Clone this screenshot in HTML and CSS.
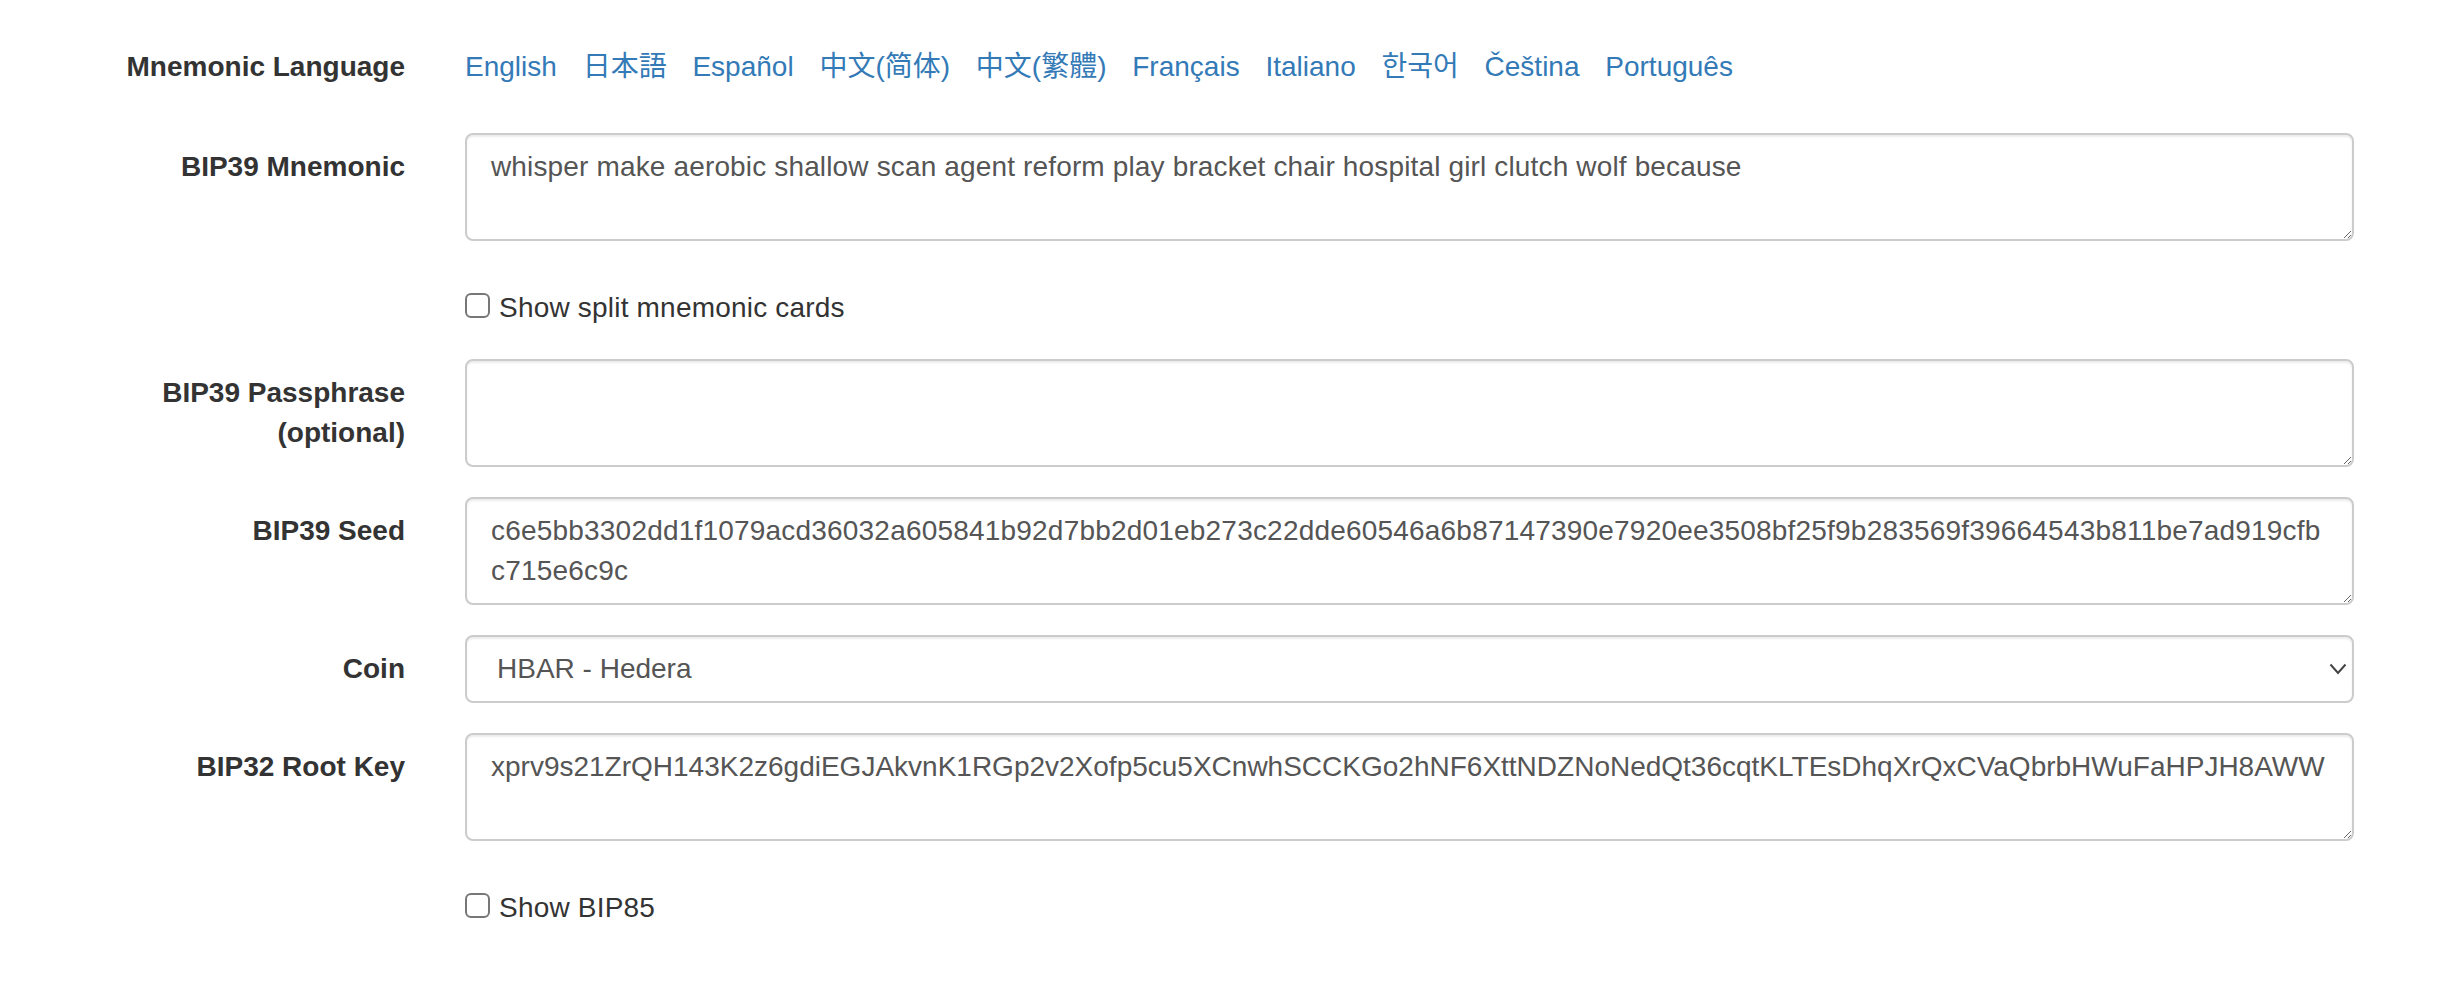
FILE: index.html
```html
<!DOCTYPE html>
<html lang="en">
<head>
<meta charset="utf-8">
<title>Mnemonic Code Converter</title>
<link rel="stylesheet" href="styles.css">
</head>
<body>
<form class="form">
  <div class="form-group lang-group">
    <label class="control-label">Mnemonic Language</label>
    <div class="controls languages">
      <a href="#english">English</a>
      <a href="#japanese" class="ja" lang="ja">日本語</a>
      <a href="#spanish">Español</a>
      <a href="#chinese_simplified" class="sc" lang="zh-Hans">中文(简体)</a>
      <a href="#chinese_traditional" class="tc" lang="zh-Hant">中文(繁體)</a>
      <a href="#french">Français</a>
      <a href="#italian">Italiano</a>
      <a href="#korean" class="ko" lang="ko">한국어</a>
      <a href="#czech">Čeština</a>
      <a href="#portuguese">Português</a>
    </div>
  </div>

  <div class="form-group">
    <label class="control-label" for="phrase">BIP39 Mnemonic</label>
    <div class="controls">
      <textarea id="phrase" class="form-control phrase">whisper make aerobic shallow scan agent reform play bracket chair hospital girl clutch wolf because</textarea>
    </div>
  </div>

  <div class="form-group checkbox">
    <div class="controls offset">
      <label class="check-label"><input type="checkbox" class="check">Show split mnemonic cards</label>
    </div>
  </div>

  <div class="form-group">
    <label class="control-label" for="passphrase">BIP39 Passphrase (optional)</label>
    <div class="controls">
      <textarea id="passphrase" class="form-control"></textarea>
    </div>
  </div>

  <div class="form-group">
    <label class="control-label" for="seed">BIP39 Seed</label>
    <div class="controls">
      <textarea id="seed" class="form-control seed">c6e5bb3302dd1f1079acd36032a605841b92d7bb2d01eb273c22dde60546a6b87147390e7920ee3508bf25f9b283569f39664543b811be7ad919cfbc715e6c9c</textarea>
    </div>
  </div>

  <div class="form-group">
    <label class="control-label" for="network">Coin</label>
    <div class="controls select-wrap">
      <select id="network" class="form-control">
        <option>HBAR - Hedera</option>
      </select>
      <svg class="chevron" viewBox="0 0 18 12" aria-hidden="true"><polyline points="1.5,1.5 9,10 16.5,1.5" fill="none" stroke="#444" stroke-width="2"/></svg>
    </div>
  </div>

  <div class="form-group">
    <label class="control-label" for="root-key">BIP32 Root Key</label>
    <div class="controls">
      <textarea id="root-key" class="form-control">xprv9s21ZrQH143K2z6gdiEGJAkvnK1RGp2v2Xofp5cu5XCnwhSCCKGo2hNF6XttNDZNoNedQt36cqtKLTEsDhqXrQxCVaQbrbHWuFaHPJH8AWW</textarea>
    </div>
  </div>

  <div class="form-group checkbox">
    <div class="controls offset">
      <label class="check-label"><input type="checkbox" class="check">Show BIP85</label>
    </div>
  </div>
</form>
</body>
</html>
```

FILE: styles.css
```css
* {
  box-sizing: border-box;
}

html,
body {
  margin: 0;
  padding: 0;
  background: #fff;
}

body {
  font-family: "Liberation Sans", Arial, Helvetica, sans-serif;
  font-size: 28px;
  line-height: 40px;
  color: #333;
}

.form {
  padding: 33px 0 0 75px;
}

.form-group {
  display: flex;
  margin-bottom: 30px;
}

.lang-group {
  margin-bottom: 32px;
}

.control-label {
  flex: 0 0 330px;
  text-align: right;
  font-weight: bold;
  padding-top: 14px;
}

.controls {
  flex: 0 0 1889px;
  margin-left: 60px;
}

.controls.offset {
  margin-left: 390px;
}

.languages {
  height: 68px;
  padding-top: 14px;
}

.languages a {
  color: #337ab7;
  text-decoration: none;
  padding-right: 18px;
}

.languages .ja {
  font-family: "Liberation Sans", "Noto Sans CJK JP", sans-serif;
}

.languages .sc {
  font-family: "Liberation Sans", "Noto Sans CJK SC", sans-serif;
}

.languages .tc {
  font-family: "Liberation Sans", "Noto Sans CJK TC", sans-serif;
}

.languages .ko {
  font-family: "Liberation Sans", "Noto Sans CJK KR", sans-serif;
}

.form-control {
  display: block;
  width: 100%;
  margin: 0;
  padding: 12px 24px;
  font-family: "Liberation Sans", Arial, Helvetica, sans-serif;
  font-size: 28px;
  line-height: 40px;
  color: #555;
  background: #fff;
  border: 2px solid #ccc;
  border-radius: 8px;
  box-shadow: inset 0 2px 2px rgba(0, 0, 0, 0.075);
  outline: none;
}

textarea.form-control {
  height: 108px;
  resize: vertical;
  overflow: hidden;
}

.phrase {
  letter-spacing: 0.15px;
}

.seed {
  letter-spacing: 0.2px;
}

.select-wrap {
  position: relative;
}

select.form-control {
  -webkit-appearance: none;
  appearance: none;
  height: 68px;
  padding: 12px 48px 12px 30px;
  color: #555;
}

.chevron {
  position: absolute;
  right: 7px;
  top: 28px;
  width: 18px;
  height: 12px;
  pointer-events: none;
}

.checkbox {
  padding-top: 14px;
  margin-bottom: 31px;
}

.check-label {
  display: flex;
  align-items: flex-start;
  font-weight: normal;
  color: #333;
  padding-top: 3px;
  letter-spacing: 0.2px;
}

.check {
  -webkit-appearance: none;
  appearance: none;
  flex: none;
  width: 25px;
  height: 25px;
  margin: 5px 9px 0 0;
  border: 2px solid #777;
  border-radius: 6px;
  background: #fff;
}
```
